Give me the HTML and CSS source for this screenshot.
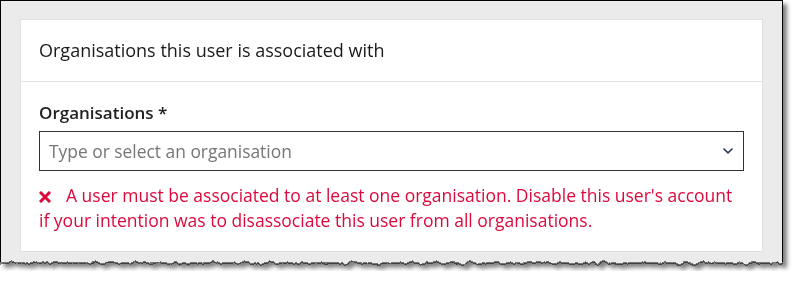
FILE: index.html
```html
<!DOCTYPE html>
<html lang="en">
<head>
    <meta charset="UTF-8">
    <meta name="viewport" content="width=device-width, initial-scale=1.0">
    <title>User organisations</title>
    <link rel="stylesheet" href="styles.css">
</head>
<body>

    <div class="sheet">
        <div class="frame">
            <div class="card">
                <div class="card-header">
                    <h2>Organisations this user is associated with</h2>
                </div>

                <div class="card-body">
                    <label for="organisations">Organisations *</label>
                    <div class="select">
                        <input type="text" id="organisations" placeholder="Type or select an organisation">
                        <svg class="chevron" width="12" height="8" viewBox="0 0 12 8">
                            <path d="M1.5 1.5 L6 5.8 L10.5 1.5" fill="none" stroke="#2b3a55" stroke-width="1.6"/>
                        </svg>
                    </div>

                    <p class="error">
                        <svg class="error-icon" width="12" height="12" viewBox="0 0 12 12">
                            <path d="M2 2 L10 10 M10 2 L2 10" stroke="#dc0a3c" stroke-width="3" stroke-linecap="square"/>
                        </svg>A user must be associated to at least one organisation. Disable this user's account if your intention was to disassociate this user from all organisations.
                    </p>
                </div>
            </div>
        </div>

        <!-- torn bottom edge of the screenshot -->
        <svg class="torn" width="783" height="12" viewBox="0 0 783 12">
            <defs>
                <filter id="tear" x="-5%" y="-100%" width="110%" height="300%">
                    <feTurbulence type="fractalNoise" baseFrequency="0.12 0.02" numOctaves="3" seed="7"/>
                    <feDisplacementMap in="SourceGraphic" scale="7" xChannelSelector="B" yChannelSelector="G"/>
                </filter>
            </defs>
            <g filter="url(#tear)">
                <rect x="-20" y="-10" width="823" height="14" fill="#ebebeb"/>
                <line x1="-20" y1="4" x2="803" y2="4" stroke="#000" stroke-width="1.2"/>
            </g>
            <line x1="0.5" y1="0" x2="0.5" y2="3" stroke="#000"/>
            <line x1="782.5" y1="0" x2="782.5" y2="3" stroke="#000"/>
        </svg>
    </div>

</body>
</html>
```

FILE: styles.css
```css
body {
    margin: 0;
    font-family: "Open Sans", "Noto Sans", sans-serif;
    background-color: #fff;
    color: #222;
}
.sheet {
    width: 783px;
    filter: drop-shadow(4px 4px 2px rgba(0, 0, 0, 0.5));
}
.frame {
    background-color: #ebebeb;
    border: 1px solid #000;
    border-bottom: none;
    padding: 18px 19px 7px 19px;
}
.card {
    background-color: white;
    border: 1px solid #e0e0e0;
}
.card-header {
    height: 61px;
    display: flex;
    align-items: center;
    padding: 0 18px;
    border-bottom: 1px solid #e6e6e6;
}
.card-header h2 {
    margin: 0 0 2px 0;
    font-size: 18px;
    font-weight: 400;
    color: #1a1a1a;
}
.card-body {
    padding: 19px 18px 18px 18px;
}
label {
    display: block;
    font-size: 17px;
    font-weight: 600;
    line-height: 24px;
    margin-bottom: 6px;
}
.select {
    position: relative;
}
.select input {
    display: block;
    width: 100%;
    box-sizing: border-box;
    height: 40px;
    padding: 0 40px 0 9px;
    border: 1px solid #333;
    border-radius: 0;
    font-family: inherit;
    font-size: 17.4px;
    color: #222;
}
.select input::placeholder {
    color: #767676;
}
.chevron {
    position: absolute;
    right: 10px;
    top: 16px;
}
.error {
    margin: 12px 0 0 0;
    font-size: 17.5px;
    line-height: 25px;
    color: #dc0a3c;
}
.error-icon {
    vertical-align: -1px;
    margin-right: 15px;
}
.torn {
    display: block;
}
```
